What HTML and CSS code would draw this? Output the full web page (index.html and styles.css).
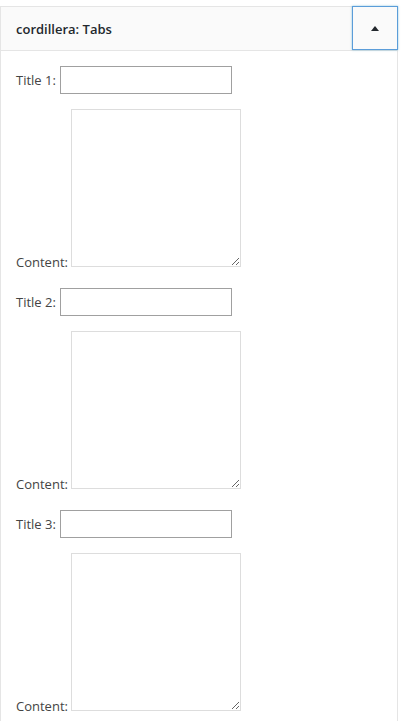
FILE: index.html
```html
<!DOCTYPE html>
<html>
<head>
<meta charset="utf-8">
<link rel="stylesheet" href="styles.css">
</head>
<body>
<div class="widget">
  <div class="widget-top">
    <h3 class="widget-title">cordillera: Tabs</h3>
    <button class="toggle" type="button" aria-label="Collapse"><span class="arrow"></span></button>
  </div>
  <div class="widget-inside">
    <p class="row"><label>Title 1:</label><input type="text"></p>
    <p class="row area"><label>Content:</label><textarea></textarea></p>
    <p class="row"><label>Title 2:</label><input type="text"></p>
    <p class="row area"><label>Content:</label><textarea></textarea></p>
    <p class="row"><label>Title 3:</label><input type="text"></p>
    <p class="row area"><label>Content:</label><textarea></textarea></p>
  </div>
</div>
</body>
</html>
```
FILE: styles.css
```css
html, body {
  margin: 0;
  padding: 0;
  background: #fff;
}
body {
  font-family: "Open Sans", "Liberation Sans", sans-serif;
  font-size: 13px;
  color: #444;
}
.widget {
  margin-top: 6px;
  width: 396px;
  border: 1px solid #e5e5e5;
  background: #fff;
}
.widget-top {
  display: flex;
  align-items: center;
  justify-content: space-between;
  height: 43px;
  background: #fafafa;
  border-bottom: 1px solid #e5e5e5;
}
.widget-title {
  margin: 0 0 0 15px;
  font-size: 13px;
  font-weight: 600;
  color: #23282d;
}
.toggle {
  box-sizing: border-box;
  width: 46px;
  height: 44px;
  margin: -1px -1px 0 0;
  align-self: flex-start;
  border: 1px solid #5b9dd9;
  box-shadow: 0 0 2px rgba(30, 140, 190, 0.5);
  background: #fafafa;
  display: flex;
  align-items: center;
  justify-content: center;
  padding: 0;
}
.arrow {
  width: 0;
  height: 0;
  border-left: 4px solid transparent;
  border-right: 4px solid transparent;
  border-bottom: 5px solid #23282d;
}
.widget-inside {
  padding: 15px 15px 10px;
}
.row {
  margin: 0;
  display: flex;
  align-items: flex-end;
  gap: 4px;
}
.row + .row {
  margin-top: 15px;
}
.row.area + .row {
  margin-top: 21px;
}
.row label {
  line-height: 18px;
}
.row:not(.area) {
  align-items: center;
}
input[type="text"] {
  box-sizing: border-box;
  width: 172px;
  height: 28px;
  margin: 0;
  border: 1px solid #a0a0a0;
  background: #fff;
  font: inherit;
}
textarea {
  box-sizing: border-box;
  width: 170px;
  height: 158px;
  margin: 0 0 0 -1px;
  border: 1px solid #ddd;
  background: #fff;
  font: inherit;
  display: block;
}
.row.area label {
  margin-bottom: -4px;
}
```
